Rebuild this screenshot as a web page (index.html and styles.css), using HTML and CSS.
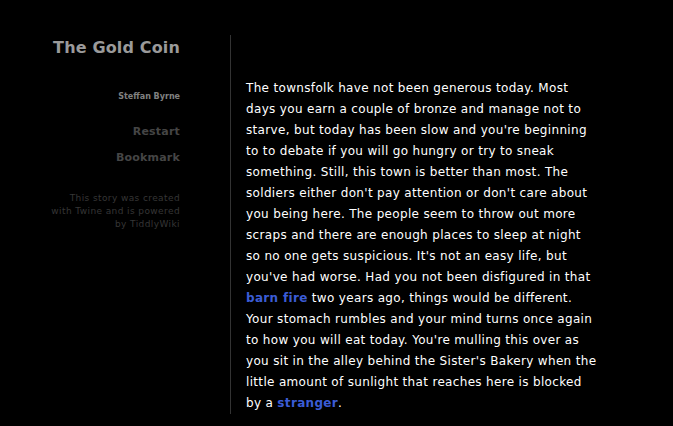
FILE: index.html
```html
<!DOCTYPE html>
<html>
<head>
<meta charset="utf-8">
<link rel="stylesheet" href="styles.css">
</head>
<body>
<div class="story">
  <div class="sidebar">
    <h1 class="title">The Gold Coin</h1>
    <div class="author">Steffan Byrne</div>
    <ul class="menu">
      <li>Restart</li>
      <li>Bookmark</li>
    </ul>
    <p class="credits">This story was created<br>with Twine and is powered<br>by TiddlyWiki</p>
  </div>
  <div class="passage">
    <p class="body">The townsfolk have not been generous today. Most<br>days you earn a couple of bronze and manage not to<br>starve, but today has been slow and you're beginning<br>to to debate if you will go hungry or try to sneak<br>something. Still, this town is better than most. The<br>soldiers either don't pay attention or don't care about<br>you being here. The people seem to throw out more<br>scraps and there are enough places to sleep at night<br>so no one gets suspicious. It's not an easy life, but<br>you've had worse. Had you not been disfigured in that<br><a class="link">barn fire</a> two years ago, things would be different.<br>Your stomach rumbles and your mind turns once again<br>to how you will eat today. You're mulling this over as<br>you sit in the alley behind the Sister's Bakery when the<br>little amount of sunlight that reaches here is blocked<br>by a <a class="link">stranger</a>.</p>
  </div>
</div>
</body>
</html>
```
FILE: styles.css
```css
html, body {
  margin: 0;
  padding: 0;
  background: #000;
  height: 100%;
}
body {
  font-family: "DejaVu Sans", Verdana, sans-serif;
}
.story {
  display: flex;
  align-items: flex-start;
  padding-top: 35px;
}
.sidebar {
  width: 230px;
  box-sizing: border-box;
  padding-right: 50px;
  text-align: right;
}
.title {
  margin: 0;
  padding-top: 2px;
  font-size: 16px;
  line-height: 22px;
  font-weight: bold;
  color: #9a9a9a;
  letter-spacing: 0.15px;
}
.author {
  margin-top: 32px;
  font-size: 8px;
  line-height: 12px;
  font-weight: bold;
  color: #808080;
}
.menu {
  list-style: none;
  margin: 16px 0 0;
  padding: 0;
}
.menu li {
  font-size: 11px;
  line-height: 26px;
  font-weight: bold;
  color: #454545;
  letter-spacing: 0.2px;
}
.credits {
  margin: 21px 0 0;
  font-size: 9px;
  line-height: 13px;
  color: #363636;
  letter-spacing: 0.4px;
}
.passage {
  border-left: 1px solid #333;
  padding: 43px 0 0 15px;
  width: 400px;
}
.body {
  margin: 0;
  font-size: 12px;
  line-height: 21px;
  color: #fff;
  letter-spacing: 0.33px;
  white-space: nowrap;
}
.link {
  color: #3b5cd6;
  font-weight: bold;
}
```
